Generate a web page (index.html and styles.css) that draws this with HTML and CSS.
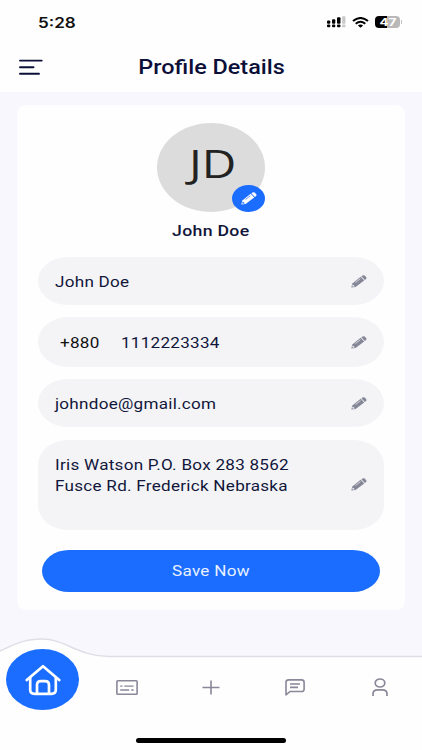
FILE: index.html
```
<!DOCTYPE html>
<html lang="en">
<head>
    <meta charset="UTF-8">
    <meta name="viewport" content="width=device-width, initial-scale=1.0">
    <title>Profile Details</title>
    <link rel="stylesheet" href="styles.css">
</head>
<body>

    <!-- Shared pencil icon -->
    <svg class="sprite">
        <symbol id="pencil" viewBox="0 0 16 13" preserveAspectRatio="none">
            <path d="M.3 12.6 1.3 8.4 9.7 1.7 13.2 5.5 4.6 12.1Z" fill="currentColor"/>
            <path d="M10.4 1.2 11.6.4Q12.7-.2 13.7.6L15.1 2Q15.9 3 15.1 4L13.8 5Z" fill="currentColor"/>
            <path class="pencil-cut" d="M1.7 9.5 3.8 11.3 2.1 11.8 1.2 11.1Z"/>
            <path class="pencil-line" d="M4.5 7.5 9.5 3.6"/>
        </symbol>
    </svg>

    <header class="header">
        <div class="status">
            <span class="time stretch">5:28</span>
            <div class="status-icons">
                <svg width="19" height="12" viewBox="0 0 19 12">
                    <g fill="#000">
                        <rect x="0" y="4.5" width="3.3" height="3.3" rx="1"/>
                        <rect x="5" y="3.2" width="3.3" height="4.6" rx="1"/>
                        <rect x="10" y="1.3" width="3.5" height="6.5" rx="1"/>
                        <rect x="0" y="8.6" width="3.3" height="2.7" rx="1"/>
                        <rect x="5" y="8.6" width="3.3" height="2.7" rx="1"/>
                        <rect x="10" y="8.6" width="3.5" height="2.7" rx="1"/>
                    </g>
                    <path d="M15.2.8q0-.6.6-.6h2q.6 0 .6.6v6.4q0 .6-.6.6h-2q-.6 0-.6-.6zM15.2 9.2q0-.6.6-.6h2q.6 0 .6.6v1.5q0 .6-.6.6h-2q-.6 0-.6-.6z" fill="#c8c8c8"/>
                </svg>
                <svg width="17" height="11" viewBox="0 0 17 11">
                    <path d="M1 4.1Q8.5-2.1 16 4.1" fill="none" stroke="#000" stroke-width="2"/>
                    <path d="M3.7 6.7Q8.5 2.8 13.3 6.7" fill="none" stroke="#000" stroke-width="1.9"/>
                    <path d="M5.9 8.6Q8.5 6.6 11.1 8.6L8.5 10.7Z"/>
                </svg>
                <div class="battery"><span class="stretch">47</span></div>
            </div>
        </div>
        <div class="title-bar">
            <svg class="menu" width="24" height="16" viewBox="0 0 24 16">
                <path d="M1 1.6H22.7M1 8.2H14.5M1 14.8H20" fill="none" stroke="#0c0f38" stroke-width="1.9" stroke-linecap="round"/>
            </svg>
            <h1 class="title"><span class="stretch">Profile Details</span></h1>
        </div>
    </header>

    <main class="card">
        <div class="avatar">
            <span class="initials stretch">JD</span>
            <button class="avatar-edit" aria-label="Edit photo"><svg class="pencil"><use href="#pencil"/></svg></button>
        </div>
        <h2 class="name"><span class="stretch">John Doe</span></h2>

        <div class="field">
            <span class="value stretch">John Doe</span>
            <svg class="pencil"><use href="#pencil"/></svg>
        </div>
        <div class="field phone">
            <span class="code stretch">+880</span>
            <span class="value stretch">1112223334</span>
            <svg class="pencil"><use href="#pencil"/></svg>
        </div>
        <div class="field email">
            <span class="value stretch">johndoe@gmail.com</span>
            <svg class="pencil"><use href="#pencil"/></svg>
        </div>
        <div class="field address">
            <span class="value stretch">Iris Watson P.O. Box 283 8562<br>Fusce Rd. Frederick Nebraska</span>
            <svg class="pencil"><use href="#pencil"/></svg>
        </div>

        <button class="save"><span class="stretch">Save Now</span></button>
    </main>

    <nav class="nav">
        <svg class="nav-shape" viewBox="0 0 422 115">
            <path d="M0 16C15 9 24 4 42 4C65 4 78 21.5 109 21.5H422V115H0Z" fill="#fefefe"/>
            <path d="M0 16C15 9 24 4 42 4C65 4 78 21.5 109 21.5H422" fill="none" stroke="#dfdee6" stroke-width="1.5"/>
        </svg>
        <div class="tabs">
            <a class="tab active">
                <svg width="36" height="32" viewBox="0 0 36 32">
                    <g fill="none" stroke="#fff" stroke-width="2.7" stroke-linecap="round" stroke-linejoin="round">
                        <path d="M1.8 16.1 18 2.2 34.2 16.1"/>
                        <path d="M5.2 14V26Q5.2 29.8 9.5 29.8H26.5Q30.8 29.8 30.8 26V14"/>
                        <path d="M12 29.5V21Q12 17.2 16 17.2H20Q24 17.2 24 21V29.5"/>
                    </g>
                </svg>
            </a>
            <a class="tab">
                <svg width="22" height="15" viewBox="0 0 22 15">
                    <g fill="none" stroke="#8a8799" stroke-width="1.6">
                        <rect x=".9" y=".8" width="20.2" height="13.4" rx=".8"/>
                        <path d="M4.2 6.1H6.5M8.3 6.1H17.6M4.2 10H13.2M15.2 10H17.7" stroke-width="1.4"/>
                    </g>
                </svg>
            </a>
            <a class="tab">
                <svg width="18" height="15" viewBox="0 0 18 15">
                    <path d="M.5 7.5H17.5M9 .5V14.5" fill="none" stroke="#8a8799" stroke-width="1.6"/>
                </svg>
            </a>
            <a class="tab">
                <svg width="20" height="17" viewBox="0 0 20 17">
                    <g fill="none" stroke="#8a8799" stroke-width="1.6" stroke-linejoin="round">
                        <path d="M1 15.8V3.2Q1 .9 3.6.9H16.5Q19.1.9 19.1 3.2V10.2Q19.1 12.5 16.5 12.5H5Z"/>
                        <path d="M5 5H15M5 8.4H13"/>
                    </g>
                </svg>
            </a>
            <a class="tab">
                <svg width="16" height="19" viewBox="0 0 16 19">
                    <g fill="none" stroke="#8a8799" stroke-width="1.7">
                        <ellipse cx="8" cy="5" rx="4.8" ry="4"/>
                        <path d="M1 18V15.8Q1 11.9 5.7 11.9H10.3Q15 11.9 15 15.8V18"/>
                    </g>
                </svg>
            </a>
        </div>
        <div class="home-indicator"></div>
    </nav>

</body>
</html>
```
FILE: styles.css
```
* {
    box-sizing: border-box;
}

body {
    margin: 0;
    height: 750px;
    overflow: hidden;
    display: flex;
    flex-direction: column;
    background-color: #f8f7fe;
    color: #11163a;
    font-family: Roboto, sans-serif;
}

button {
    border: none;
    padding: 0;
    font-family: inherit;
    cursor: pointer;
}

svg {
    display: block;
    flex: none;
}

.sprite {
    display: none;
}

/* Wide lettering */
.stretch {
    display: inline-block;
    transform: scaleX(1.22);
    white-space: nowrap;
}

/* Header */
.header {
    flex: none;
    height: 92px;
    background-color: #fefefe;
}

.status {
    display: flex;
    justify-content: space-between;
    height: 44px;
    padding: 0 21px 0 38px;
    align-items: center;
}

.time {
    transform-origin: left;
    font-family: Inter, sans-serif;
    font-size: 14px;
    font-weight: 600;
    color: #111;
}

.status-icons {
    display: flex;
    align-items: center;
    gap: 6px;
}

.battery {
    position: relative;
    display: flex;
    align-items: center;
    justify-content: center;
    width: 25px;
    height: 12px;
    margin-right: 1px;
    border-radius: 4px;
    background: linear-gradient(90deg, #000 47%, #b9b9b9 47%);
    color: #fff;
    font: 700 11px/12px Inter, sans-serif;
}

.battery::after {
    content: "";
    position: absolute;
    right: -2px;
    top: 4px;
    width: 1px;
    height: 4px;
    background-color: #c4c4c4;
}

.title-bar {
    display: grid;
    grid-template-columns: 24px 1fr 24px;
    align-items: center;
    height: 46px;
    padding: 0 18px;
}

.menu {
    margin-left: 1px;
}

.title {
    margin: 0;
    padding-left: 1px;
    text-align: center;
    font-size: 20px;
    line-height: 24px;
    font-weight: 500;
    color: #0c0f38;
}

.title .stretch {
    transform: scaleX(1.17);
}

/* Profile card */
.card {
    display: flex;
    flex-direction: column;
    flex: none;
    height: 505px;
    margin: 13px 17px 0;
    padding: 18px 21px 0;
    background-color: #fefefe;
    border-radius: 9px;
}

.avatar {
    position: relative;
    display: flex;
    align-items: center;
    justify-content: center;
    align-self: center;
    width: 108px;
    height: 89px;
    border-radius: 50%;
    background-color: #dcdcdc;
}

.initials {
    font-family: "Open Sans", sans-serif;
    font-size: 39px;
    line-height: 78px;
    padding: 0 0 10px 2px;
    color: #222;
}

.avatar-edit {
    --cut: #1a6dff;
    position: absolute;
    right: 0;
    bottom: 0;
    display: flex;
    align-items: center;
    justify-content: center;
    width: 33px;
    height: 27px;
    border-radius: 50%;
    background-color: #1a6dff;
}

.pencil {
    width: 16px;
    height: 13px;
    color: #858797;
}

.avatar-edit .pencil {
    color: #fff;
}

.pencil-cut {
    fill: var(--cut, #f4f4f7);
}

.pencil-line {
    fill: none;
    stroke: var(--cut, #f4f4f7);
    stroke-width: .7;
}

.name {
    margin: 10px 0 16px;
    text-align: center;
    font-size: 14.5px;
    line-height: 19px;
    font-weight: 500;
    letter-spacing: .25px;
}

.field {
    display: flex;
    align-items: center;
    flex: none;
    height: 48px;
    margin-bottom: 12px;
    padding: 0 17px;
    border-radius: 30px / 24px;
    background-color: #f4f4f7;
    font-size: 14px;
    line-height: 21px;
    letter-spacing: .22px;
}

.field .stretch {
    transform-origin: left;
    padding-top: 2px;
}

.field .pencil {
    margin-left: auto;
}

.phone {
    height: 50px;
    padding-left: 22px;
    border-radius: 30px / 25px;
}

.code {
    width: 61px;
    color: #111;
}

.email {
    margin-bottom: 13px;
}

.address {
    height: 90px;
    margin-bottom: 20px;
    border-radius: 30px / 25px;
}

.address .value {
    margin-bottom: 20px;
}

.address .pencil {
    margin-bottom: 1px;
}

.save {
    flex: none;
    height: 42px;
    margin: 0 4px;
    border-radius: 27px / 21px;
    background-color: #1a6dff;
    color: #e9f1ff;
    font-size: 14px;
    letter-spacing: .25px;
}

/* Bottom navigation */
.nav {
    position: relative;
    height: 115px;
    margin-top: auto;
}

.nav-shape {
    position: absolute;
    inset: 0;
    width: 100%;
    height: 100%;
}

.tabs {
    position: relative;
    display: grid;
    grid-template-columns: repeat(5, 1fr);
    align-items: center;
    height: 90px;
    padding-top: 14px;
}

.tab {
    display: flex;
    align-items: center;
    justify-content: center;
}

.active {
    justify-self: center;
    width: 73px;
    height: 61px;
    margin: -15px 0 0 1px;
    border-radius: 50%;
    background-color: #1a6dff;
}

.home-indicator {
    position: relative;
    width: 150px;
    height: 5px;
    margin: 13px auto 0;
    border-radius: 3px;
    background-color: #000;
}
```
